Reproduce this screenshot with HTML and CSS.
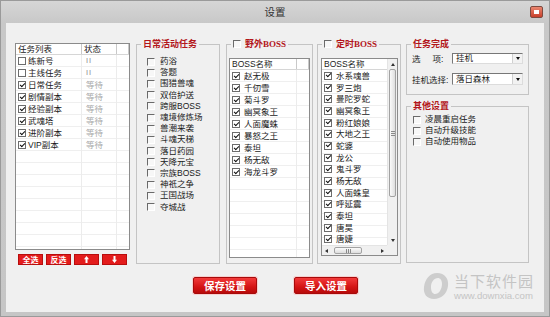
FILE: index.html
```html
<!DOCTYPE html>
<html lang="zh">
<head>
    <meta charset="UTF-8">
    <title>设置</title>
    <link rel="stylesheet" href="styles.css">
</head>
<body>
<div class="window">
    <div class="titlebar">
        <span class="title">设置</span>
        <span class="close"><i></i></span>
    </div>

    <div class="client">
        <div class="main">
            <!-- task list -->
            <div class="left">
                <div class="lv tasks">
                    <div class="lv-head">
                        <span class="h1">任务列表</span><span class="h2">状态</span><span class="h3"></span>
                    </div>
                    <div class="lv-body">
                        <div class="trow"><span><i class="box std"></i>练新号</span><span class="st">II</span></div>
                        <div class="trow"><span><i class="box std"></i>主线任务</span><span class="st">II</span></div>
                        <div class="trow"><span><i class="box std on"></i>日常任务</span><span class="st wait">等待</span></div>
                        <div class="trow"><span><i class="box std on"></i>剧情副本</span><span class="st wait">等待</span></div>
                        <div class="trow"><span><i class="box std on"></i>经验副本</span><span class="st wait">等待</span></div>
                        <div class="trow"><span><i class="box std on"></i>武魂塔</span><span class="st wait">等待</span></div>
                        <div class="trow"><span><i class="box std on"></i>进阶副本</span><span class="st wait">等待</span></div>
                        <div class="trow"><span><i class="box std on"></i>VIP副本</span><span class="st wait">等待</span></div>
                    </div>
                </div>
                <div class="minibtns">
                    <span class="mbtn">全选</span>
                    <span class="mbtn">反选</span>
                    <span class="mbtn"><svg width="5" height="7" viewBox="0 0 5 7"><polygon points="2.5,0 5,3.2 3.5,3.2 3.5,7 1.5,7 1.5,3.2 0,3.2" fill="#fff"/></svg></span>
                    <span class="mbtn"><svg width="5" height="7" viewBox="0 0 5 7"><polygon points="2.5,7 5,3.8 3.5,3.8 3.5,0 1.5,0 1.5,3.8 0,3.8" fill="#fff"/></svg></span>
                </div>
            </div>

            <!-- daily activities -->
            <fieldset class="group daily">
                <legend>日常活动任务</legend>
                <div class="checks">
                    <div class="item"><i class="box flat"></i>药浴</div>
                    <div class="item"><i class="box flat"></i>答题</div>
                    <div class="item"><i class="box flat"></i>围猎兽魂</div>
                    <div class="item"><i class="box flat"></i>双倍护送</div>
                    <div class="item"><i class="box flat"></i>跨服BOSS</div>
                    <div class="item"><i class="box flat"></i>魂境修炼场</div>
                    <div class="item"><i class="box flat"></i>兽潮来袭</div>
                    <div class="item"><i class="box flat"></i>斗魂天梯</div>
                    <div class="item"><i class="box flat"></i>落日药园</div>
                    <div class="item"><i class="box flat"></i>天降元宝</div>
                    <div class="item"><i class="box flat"></i>宗族BOSS</div>
                    <div class="item"><i class="box flat"></i>神祇之争</div>
                    <div class="item"><i class="box flat"></i>王国战场</div>
                    <div class="item"><i class="box flat"></i>夺城战</div>
                </div>
            </fieldset>

            <!-- field boss -->
            <fieldset class="group wild">
                <legend><i class="box flat"></i>野外BOSS</legend>
                <div class="lv boss">
                    <div class="lv-head">
                        <span class="b1">BOSS名称</span><span class="b2"></span>
                    </div>
                    <div class="lv-body">
                        <div class="brow"><i class="box std on"></i>赵无极</div>
                        <div class="brow"><i class="box std on"></i>千仞雪</div>
                        <div class="brow"><i class="box std on"></i>菊斗罗</div>
                        <div class="brow"><i class="box std on"></i>幽冥象王</div>
                        <div class="brow"><i class="box std on"></i>人面魔蛛</div>
                        <div class="brow"><i class="box std on"></i>暴怒之王</div>
                        <div class="brow"><i class="box std on"></i>泰坦</div>
                        <div class="brow"><i class="box std on"></i>杨无敌</div>
                        <div class="brow"><i class="box std on"></i>海龙斗罗</div>
                    </div>
                </div>
            </fieldset>

            <!-- timed boss -->
            <fieldset class="group timed">
                <legend><i class="box flat"></i>定时BOSS</legend>
                <div class="lv scrolled">
                    <div class="pane">
                        <div class="lv-head">
                            <span class="b1">BOSS名称</span>
                        </div>
                        <div class="lv-body">
                            <div class="brow"><i class="box std on"></i>水系魂兽</div>
                            <div class="brow"><i class="box std on"></i>罗三炮</div>
                            <div class="brow"><i class="box std on"></i>曼陀罗蛇</div>
                            <div class="brow"><i class="box std on"></i>幽冥象王</div>
                            <div class="brow"><i class="box std on"></i>粉红娘娘</div>
                            <div class="brow"><i class="box std on"></i>大地之王</div>
                            <div class="brow"><i class="box std on"></i>蛇婆</div>
                            <div class="brow"><i class="box std on"></i>龙公</div>
                            <div class="brow"><i class="box std on"></i>鬼斗罗</div>
                            <div class="brow"><i class="box std on"></i>杨无敌</div>
                            <div class="brow"><i class="box std on"></i>人面蛛皇</div>
                            <div class="brow"><i class="box std on"></i>呼延震</div>
                            <div class="brow"><i class="box std on"></i>泰坦</div>
                            <div class="brow"><i class="box std on"></i>唐昊</div>
                            <div class="brow"><i class="box std on"></i>唐婕</div>
                        </div>
                    </div>
                    <div class="vscroll">
                        <span class="sb-btn"><i class="tri up"></i></span>
                        <span class="thumb-v"><i class="grip-v"></i></span>
                        <span class="sb-fill"></span>
                        <span class="sb-btn"><i class="tri down"></i></span>
                    </div>
                    <div class="hscroll">
                        <span class="sb-btn"><i class="tri lt"></i></span>
                        <span class="thumb-h"><i class="grip-h"></i></span>
                        <span class="sb-fill"></span>
                        <span class="sb-btn"><i class="tri rt"></i></span>
                    </div>
                    <div class="corner"></div>
                </div>
            </fieldset>

            <!-- right column -->
            <div class="right">
                <fieldset class="group done">
                    <legend>任务完成</legend>
                    <div class="frow first">
                        <span class="lbl"><span class="wide">选</span>项:</span>
                        <span class="select"><span>挂机</span><b></b></span>
                    </div>
                    <div class="frow">
                        <span class="lbl">挂机选择:</span>
                        <span class="select tall"><span>落日森林</span><b></b></span>
                    </div>
                </fieldset>

                <fieldset class="group other">
                    <legend>其他设置</legend>
                    <div class="checks misc">
                        <div class="item"><i class="box flat"></i>凌晨重启任务</div>
                        <div class="item"><i class="box flat"></i>自动升级技能</div>
                        <div class="item"><i class="box flat"></i>自动使用物品</div>
                    </div>
                </fieldset>
            </div>
        </div>

        <div class="actions">
            <span class="btn">保存设置</span>
            <span class="btn">导入设置</span>
        </div>

        <div class="watermark">
            <svg width="28" height="28" viewBox="0 0 28 28">
                <path fill="#cdcdcd" fill-rule="evenodd" d="M15 1 C23 1 27 7 26 14 C25 22 19 27 12 27 C5 27 1 22 2 15 C3 7 8 1 15 1 Z M16 6 C12 6 9 10 9 15 C9 20 11 22 13 22 C17 22 20 17 20 12 C20 8 18 6 16 6 Z"/>
            </svg>
            <div class="wm-text">
                <div class="wm-cn">当下软件园</div>
                <div class="wm-en">www.downxia.com</div>
            </div>
        </div>
    </div>
</div>
</body>
</html>
```

FILE: styles.css
```css
* {
    box-sizing: border-box;
}

body {
    margin: 0;
    width: 550px;
    height: 317px;
    overflow: hidden;
    background: #c8c8c8;
    font-family: "Liberation Sans", "Noto Sans CJK SC", sans-serif;
    font-size: 8.5px;
    color: #1a1a1a;
}

.window {
    width: 550px;
    height: 317px;
    border: 1px solid #9a9a9a;
    background: linear-gradient(#d6d6d6, #c8c8c8 22px, #c6c6c6);
}

/* title bar */
.titlebar {
    height: 22px;
    display: grid;
    grid-template-columns: 1fr auto 1fr;
    align-items: center;
}

.title {
    grid-column: 2;
    font-family: "Noto Sans CJK SC", sans-serif;
    font-size: 10.5px;
    line-height: 12px;
    color: #333;
}

.close {
    grid-column: 3;
    justify-self: end;
    margin-right: 6px;
    width: 13px;
    height: 12px;
    border: 1px solid #7c4a40;
    border-radius: 2px;
    background: linear-gradient(#ea8670, #c8402b);
    display: flex;
    align-items: center;
    justify-content: center;
}

.close i {
    width: 5px;
    height: 4px;
    background: #fff;
}

/* client area */
.client {
    position: relative;
    margin: 0 5px;
    height: 289px;
    background: #f0f0f0;
}

.main {
    display: flex;
    align-items: flex-start;
    padding: 20px 0 0 9px;
}

/* checkboxes */
.box {
    display: inline-block;
    position: relative;
    flex: none;
    width: 8px;
    height: 8px;
}

.box.std {
    background: #fff;
    border: 1px solid #6c6c6c;
}

.box.flat {
    background: #f7f7f7;
    border-top: 1px solid #6a6a6a;
    border-left: 1px solid #6a6a6a;
    border-right: 1px solid #fff;
    border-bottom: 1px solid #fff;
}

.box.on::after {
    content: "";
    position: absolute;
    left: 1.5px;
    top: -0.5px;
    width: 2px;
    height: 4px;
    border: solid #111;
    border-width: 0 1.6px 1.6px 0;
    transform: rotate(45deg);
}

/* list views */
.lv {
    background: #fff;
    border: 1px solid #8b8b8b;
    overflow: hidden;
}

.lv-head {
    display: flex;
    height: 11px;
    line-height: 10px;
    border-bottom: 1px solid #d6d6d6;
    color: #222;
    white-space: nowrap;
}

.lv-head span {
    border-right: 1px solid #c9c9c9;
    padding-left: 2px;
}

.lv-body {
    background-image: repeating-linear-gradient(to bottom, transparent 0 11px, #efefef 11px 12px);
}

/* task list */
.left {
    width: 115px;
    margin-right: 6px;
}

.tasks {
    height: 207px;
}

.tasks .h1 { width: 66px; }
.tasks .h2 { width: 35px; }
.tasks .h3 { flex: 1; }

.tasks .lv-body {
    height: 194px;
    background-image:
        linear-gradient(to right, transparent 65px, #ececec 65px 66px, transparent 66px 100px, #ececec 100px 101px, transparent 101px),
        repeating-linear-gradient(to bottom, transparent 0 11px, #efefef 11px 12px);
}

.trow {
    display: grid;
    grid-template-columns: 66px 35px 1fr;
    height: 12px;
    line-height: 12px;
    align-items: center;
}

.trow > span:first-child {
    display: flex;
    align-items: center;
    gap: 2px;
    padding-left: 2px;
}

.st {
    padding-left: 4px;
    color: #8c8c8c;
    font-size: 7.5px;
    letter-spacing: 1px;
}

.st.wait {
    color: #a8a8a8;
    font-size: 8.5px;
    letter-spacing: 0;
}

.minibtns {
    display: flex;
    gap: 3px;
    padding-left: 3px;
    margin-top: 4px;
}

.mbtn {
    width: 25px;
    height: 11px;
    background: #e31c1c;
    border: 1px solid #b80d0d;
    color: #fff;
    font-family: "Noto Sans CJK SC", sans-serif;
    font-weight: bold;
    font-size: 8px;
    line-height: 9px;
    display: flex;
    align-items: center;
    justify-content: center;
}

/* group boxes */
.group {
    margin: -4px 0 0;
    padding: 0;
    min-width: 0;
    border: 1px solid #c4c4c4;
}

.group legend {
    margin-left: 4px;
    padding: 0 2px;
    font-family: "Liberation Serif", "Noto Sans CJK SC", serif;
    font-weight: bold;
    font-size: 9px;
    line-height: 10px;
    color: #b3161b;
    white-space: nowrap;
}

.group legend .box {
    vertical-align: -1px;
    margin-right: 4px;
}

.checks .item {
    display: flex;
    align-items: center;
    gap: 5px;
    height: 11.2px;
    line-height: 11px;
    white-space: nowrap;
}

.daily {
    width: 84px;
    margin-right: 6px;
}

.daily .checks {
    height: 214px;
    padding: 7px 0 0 10px;
}

.wild {
    width: 87px;
    margin-right: 4px;
    padding: 0 0 5px;
}

.timed {
    width: 84px;
    padding: 0 0 7px;
}

.boss {
    width: 81px;
    height: 200px;
    margin: 9px 0 0 2px;
}

.boss .b1 { width: 67px; }
.boss .b2 { flex: 1; }

.boss .lv-body {
    height: 188px;
    background-image:
        linear-gradient(to right, transparent 66px, #ececec 66px 67px, transparent 67px),
        repeating-linear-gradient(to bottom, transparent 0 11px, #efefef 11px 12px);
}

.brow {
    display: flex;
    align-items: center;
    gap: 4px;
    height: 12px;
    line-height: 12px;
    padding-left: 2px;
    white-space: nowrap;
}

/* timed boss list with scrollbars */
.scrolled {
    width: 77px;
    height: 198px;
    margin: 9px 0 0 3px;
    display: grid;
    grid-template-columns: 1fr 10px;
    grid-template-rows: 1fr 10px;
}

.pane {
    overflow: hidden;
}

.pane .lv-head span {
    flex: 1;
    border-right: none;
}

.scrolled .brow {
    height: 11.7px;
}

.vscroll {
    grid-row: 1;
    grid-column: 2;
    display: flex;
    flex-direction: column;
    background: #f0f0f0;
    border-left: 1px solid #e4e4e4;
}

.hscroll {
    grid-row: 2;
    grid-column: 1;
    display: flex;
    background: #f0f0f0;
    border-top: 1px solid #e4e4e4;
}

.corner {
    grid-row: 2;
    grid-column: 2;
    background: #f0f0f0;
}

.sb-btn {
    flex: none;
    width: 9px;
    height: 10px;
    display: flex;
    align-items: center;
    justify-content: center;
}

.sb-fill {
    flex: 1;
}

.tri {
    width: 0;
    height: 0;
    border: 2px solid transparent;
}

.tri.up { border-bottom: 3px solid #333; border-top: none; }
.tri.down { border-top: 3px solid #333; border-bottom: none; }
.tri.lt { border-right: 3px solid #333; border-left: none; }
.tri.rt { border-left: 3px solid #333; border-right: none; }

.thumb-v {
    height: 128px;
    margin: 0 1px;
    border: 1px solid #a2a2a2;
    border-radius: 2px;
    background: linear-gradient(to right, #fafafa, #dedede);
    display: flex;
    align-items: center;
    justify-content: center;
}

.grip-v {
    width: 4px;
    height: 5px;
    background: repeating-linear-gradient(to bottom, #8a8a8a 0 1px, transparent 1px 2px);
}

.thumb-h {
    width: 28px;
    margin: 1px 0 1px 3px;
    border: 1px solid #a2a2a2;
    border-radius: 2px;
    background: linear-gradient(#fafafa, #dedede);
    display: flex;
    align-items: center;
    justify-content: center;
}

.grip-h {
    width: 5px;
    height: 4px;
    background: repeating-linear-gradient(to right, #8a8a8a 0 1px, transparent 1px 2px);
}

/* right column */
.right {
    width: 123px;
    margin-left: 5px;
}

.done {
    padding: 0 0 9px;
}

.frow {
    display: flex;
    align-items: center;
    height: 12px;
    padding-left: 5px;
    margin-top: 9px;
    white-space: nowrap;
}

.frow.first {
    margin-top: 3px;
}

.lbl {
    width: 40px;
}

.wide {
    margin-right: 12px;
}

.select {
    width: 71px;
    height: 11px;
    display: flex;
    background: #fff;
    border: 1px solid;
    border-color: #777 #dcdcdc #dcdcdc #777;
}

.select.tall {
    height: 12px;
}

.select span {
    flex: 1;
    padding-left: 3px;
    line-height: 9px;
}

.select.tall span {
    line-height: 10px;
}

.select b {
    width: 10px;
    background: #f2f2f2;
    border-left: 1px solid #d0d0d0;
    display: flex;
    align-items: center;
    justify-content: center;
}

.select b::before {
    content: "";
    border: 2.5px solid transparent;
    border-top: 3px solid #111;
    border-bottom: none;
}

.other {
    margin-top: 6px;
}

.other .checks {
    height: 151px;
    padding: 3px 0 0 6px;
}

.other .item {
    height: 11px;
    gap: 4px;
}

/* save / import */
.actions {
    display: flex;
    gap: 37px;
    padding-left: 187px;
    margin-top: 12px;
}

.btn {
    width: 64px;
    height: 17px;
    display: flex;
    align-items: center;
    justify-content: center;
    background: linear-gradient(#f23a3a, #d41414 60%, #b80b0b);
    border: 1px solid #a70a0a;
    border-radius: 2px;
    box-shadow: 0 0 0 1px #f6d0d0;
    color: #fff;
    font-family: "Noto Sans CJK SC", sans-serif;
    font-weight: bold;
    font-size: 10.5px;
    line-height: 12px;
}

/* site watermark over the bottom right corner */
.watermark {
    position: absolute;
    right: 10px;
    bottom: 12px;
    display: flex;
    align-items: center;
    gap: 4px;
}

.wm-cn {
    font-family: "Noto Sans CJK SC", sans-serif;
    font-size: 15px;
    line-height: 15px;
    letter-spacing: 1px;
    color: #c4c4c4;
}

.wm-en {
    margin-top: 3px;
    font-size: 9.6px;
    line-height: 9px;
    color: #c4c4c4;
}
```
